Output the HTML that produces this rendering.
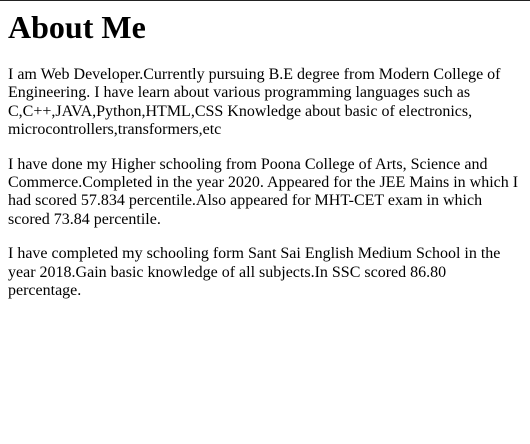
<!DOCTYPE html>
<html><head><style>
html,body{margin:0;padding:0;background:#fff}
body{border-top:1px solid #222;padding:0 8px;font-family:"Liberation Serif",serif;color:#000;font-size:16px;line-height:18.4px}
h1{font-size:32px;line-height:37px;margin:8px 0 20px;font-weight:bold}
p{margin:0 0 16px}
</style></head><body>
<h1>About Me</h1>
<p>I am Web Developer.Currently pursuing B.E degree from Modern College of Engineering. I have learn about various programming languages such as C,C++,JAVA,Python,HTML,CSS Knowledge about basic of electronics, microcontrollers,transformers,etc</p>
<p>I have done my Higher schooling from Poona College of Arts, Science and Commerce.Completed in the year 2020. Appeared for the JEE Mains in which I had scored 57.834 percentile.Also appeared for MHT-CET exam in which scored 73.84 percentile.</p>
<p>I have completed my schooling form Sant Sai English Medium School in the year 2018.Gain basic knowledge of all subjects.In SSC scored 86.80 percentage.</p>
</body></html>
